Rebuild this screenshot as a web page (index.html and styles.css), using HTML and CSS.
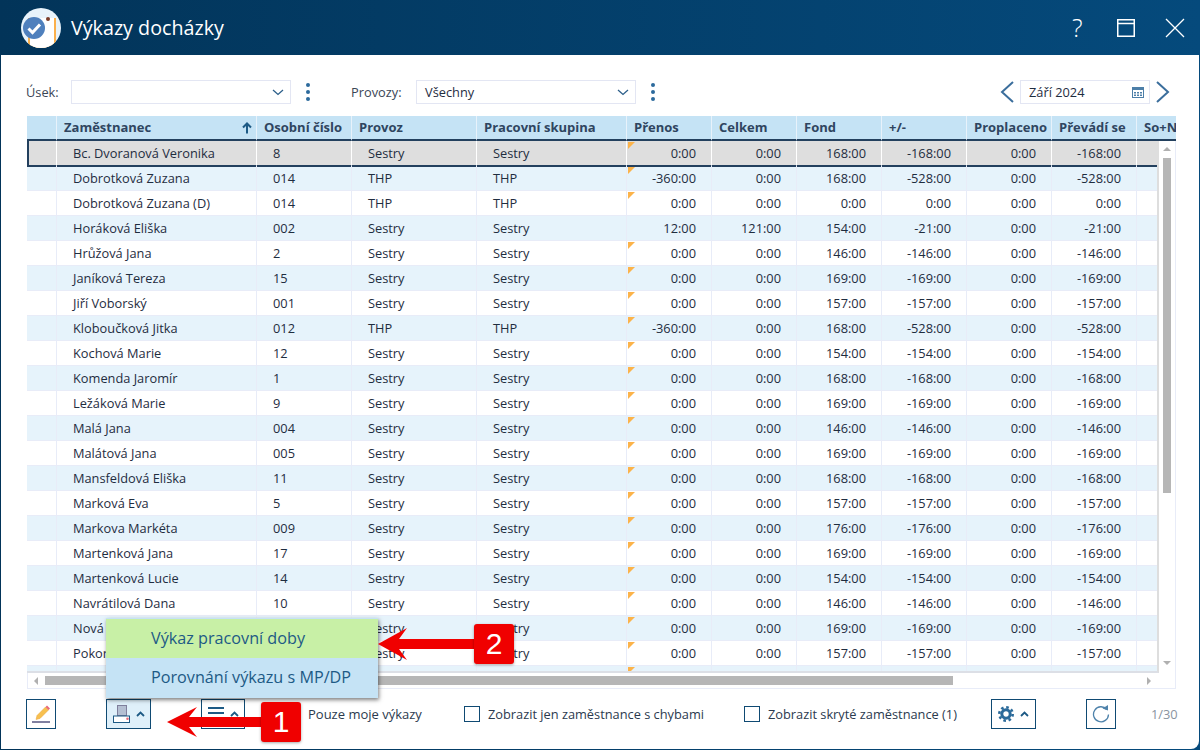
FILE: index.html
```html
<!DOCTYPE html>
<html lang="cs">
<head>
<meta charset="utf-8">
<title>Výkazy docházky</title>
<link rel="stylesheet" href="styles.css">
</head>
<body>
<div class="window">
  <header class="titlebar">
    <svg class="logo" width="40" height="40" viewBox="0 0 40 40">
      <defs><clipPath id="lc"><circle cx="20" cy="20" r="20"/></clipPath></defs>
      <circle cx="20" cy="20" r="20" fill="#e8f3fb"/>
      <g clip-path="url(#lc)">
        <rect x="7" y="10" width="28" height="32" fill="#fbb04c"/>
        <rect x="9" y="10" width="24" height="32" fill="#fff"/>
        <circle cx="27" cy="11" r="2" fill="#7b3d2a"/>
      </g>
      <circle cx="13" cy="20" r="11" fill="#4f80bd"/>
      <path d="M7.5 20.5l4 4 7.5-8" fill="none" stroke="#fff" stroke-width="3"/>
    </svg>
    <h1 class="title">Výkazy docházky</h1>
    <div class="winbtns">
      <span class="help">?</span>
      <svg width="18" height="18" viewBox="0 0 18 18"><path d="M.75.75h16.5v16.5H.75zM.75 4.5h16.5" fill="none" stroke="#fff" stroke-width="1.5"/></svg>
      <svg width="20" height="20" viewBox="0 0 20 20"><path d="M1 1l18 18M19 1L1 19" fill="none" stroke="#fff" stroke-width="1.3"/></svg>
    </div>
  </header>
  <main class="panel">
    <div class="filters">
      <span class="lbl lbl-usek">Úsek:</span>
      <div class="select"><span></span><svg width="12" height="7" viewBox="0 0 12 7"><path d="M1 1l5 4.500 5-4.500" fill="none" stroke="#2c5f8a" stroke-width="1.300"/></svg></div>
      <div class="dots"><i></i><i></i><i></i></div>
      <span class="lbl lbl-provozy">Provozy:</span>
      <div class="select"><span>Všechny</span><svg width="12" height="7" viewBox="0 0 12 7"><path d="M1 1l5 4.500 5-4.500" fill="none" stroke="#2c5f8a" stroke-width="1.300"/></svg></div>
      <div class="dots"><i></i><i></i><i></i></div>
      <svg class="prev" width="14" height="22" viewBox="0 0 14 22"><path d="M13 1L2 11l11 10" fill="none" stroke="#3b6e9c" stroke-width="2"/></svg>
      <div class="date"><span>Září 2024</span>
        <svg width="12" height="12" viewBox="0 0 12 12"><rect x=".5" y="1.500" width="11" height="10" fill="#fff" stroke="#4d7fa8"/><rect x="0" y="1" width="12" height="3" fill="#4d7fa8"/><path d="M2 6h2v1.500H2zM5 6h2v1.500H5zM8 6h2v1.500H8zM2 8.500h2V10H2zM5 8.500h2V10H5zM8 8.500h2V10H8z" fill="#4d7fa8"/></svg>
      </div>
      <svg class="next" width="14" height="22" viewBox="0 0 14 22"><path d="M1 1l11 10L1 21" fill="none" stroke="#3b6e9c" stroke-width="2"/></svg>
    </div>

    <section class="grid">
      <div class="row head">
        <div></div>
        <div class="sorted">Zaměstnanec<svg width="10" height="12" viewBox="0 0 10 12"><path d="M5 11.500V2M1 5.500L5 1.500l4 4" fill="none" stroke="#1d5a85" stroke-width="2"/></svg></div>
        <div>Osobní číslo</div><div>Provoz</div><div>Pracovní skupina</div><div>Přenos</div><div>Celkem</div><div>Fond</div><div>+/-</div><div>Proplaceno</div><div>Převádí se</div><div>So+N</div>
      </div>
      <div class="grid-body">
        <div class="rows">
          <div class="row sel"><div></div><div class="t">Bc. Dvoranová Veronika</div><div class="t">8</div><div class="t">Sestry</div><div class="t">Sestry</div><div class="n tri">0:00</div><div class="n">0:00</div><div class="n">168:00</div><div class="n">-168:00</div><div class="n">0:00</div><div class="n">-168:00</div><div></div></div>
          <div class="row alt"><div></div><div class="t">Dobrotková Zuzana</div><div class="t">014</div><div class="t">THP</div><div class="t">THP</div><div class="n tri">-360:00</div><div class="n">0:00</div><div class="n">168:00</div><div class="n">-528:00</div><div class="n">0:00</div><div class="n">-528:00</div><div></div></div>
          <div class="row"><div></div><div class="t">Dobrotková Zuzana (D)</div><div class="t">014</div><div class="t">THP</div><div class="t">THP</div><div class="n tri">0:00</div><div class="n">0:00</div><div class="n">0:00</div><div class="n">0:00</div><div class="n">0:00</div><div class="n">0:00</div><div></div></div>
          <div class="row alt"><div></div><div class="t">Horáková Eliška</div><div class="t">002</div><div class="t">Sestry</div><div class="t">Sestry</div><div class="n">12:00</div><div class="n">121:00</div><div class="n">154:00</div><div class="n">-21:00</div><div class="n">0:00</div><div class="n">-21:00</div><div></div></div>
          <div class="row"><div></div><div class="t">Hrůžová Jana</div><div class="t">2</div><div class="t">Sestry</div><div class="t">Sestry</div><div class="n tri">0:00</div><div class="n">0:00</div><div class="n">146:00</div><div class="n">-146:00</div><div class="n">0:00</div><div class="n">-146:00</div><div></div></div>
          <div class="row alt"><div></div><div class="t">Janíková Tereza</div><div class="t">15</div><div class="t">Sestry</div><div class="t">Sestry</div><div class="n tri">0:00</div><div class="n">0:00</div><div class="n">169:00</div><div class="n">-169:00</div><div class="n">0:00</div><div class="n">-169:00</div><div></div></div>
          <div class="row"><div></div><div class="t">Jiří Voborský</div><div class="t">001</div><div class="t">Sestry</div><div class="t">Sestry</div><div class="n tri">0:00</div><div class="n">0:00</div><div class="n">157:00</div><div class="n">-157:00</div><div class="n">0:00</div><div class="n">-157:00</div><div></div></div>
          <div class="row alt"><div></div><div class="t">Kloboučková Jitka</div><div class="t">012</div><div class="t">THP</div><div class="t">THP</div><div class="n tri">-360:00</div><div class="n">0:00</div><div class="n">168:00</div><div class="n">-528:00</div><div class="n">0:00</div><div class="n">-528:00</div><div></div></div>
          <div class="row"><div></div><div class="t">Kochová Marie</div><div class="t">12</div><div class="t">Sestry</div><div class="t">Sestry</div><div class="n tri">0:00</div><div class="n">0:00</div><div class="n">154:00</div><div class="n">-154:00</div><div class="n">0:00</div><div class="n">-154:00</div><div></div></div>
          <div class="row alt"><div></div><div class="t">Komenda Jaromír</div><div class="t">1</div><div class="t">Sestry</div><div class="t">Sestry</div><div class="n tri">0:00</div><div class="n">0:00</div><div class="n">168:00</div><div class="n">-168:00</div><div class="n">0:00</div><div class="n">-168:00</div><div></div></div>
          <div class="row"><div></div><div class="t">Ležáková Marie</div><div class="t">9</div><div class="t">Sestry</div><div class="t">Sestry</div><div class="n tri">0:00</div><div class="n">0:00</div><div class="n">169:00</div><div class="n">-169:00</div><div class="n">0:00</div><div class="n">-169:00</div><div></div></div>
          <div class="row alt"><div></div><div class="t">Malá Jana</div><div class="t">004</div><div class="t">Sestry</div><div class="t">Sestry</div><div class="n tri">0:00</div><div class="n">0:00</div><div class="n">146:00</div><div class="n">-146:00</div><div class="n">0:00</div><div class="n">-146:00</div><div></div></div>
          <div class="row"><div></div><div class="t">Malátová Jana</div><div class="t">005</div><div class="t">Sestry</div><div class="t">Sestry</div><div class="n tri">0:00</div><div class="n">0:00</div><div class="n">169:00</div><div class="n">-169:00</div><div class="n">0:00</div><div class="n">-169:00</div><div></div></div>
          <div class="row alt"><div></div><div class="t">Mansfeldová Eliška</div><div class="t">11</div><div class="t">Sestry</div><div class="t">Sestry</div><div class="n tri">0:00</div><div class="n">0:00</div><div class="n">168:00</div><div class="n">-168:00</div><div class="n">0:00</div><div class="n">-168:00</div><div></div></div>
          <div class="row"><div></div><div class="t">Marková Eva</div><div class="t">5</div><div class="t">Sestry</div><div class="t">Sestry</div><div class="n tri">0:00</div><div class="n">0:00</div><div class="n">157:00</div><div class="n">-157:00</div><div class="n">0:00</div><div class="n">-157:00</div><div></div></div>
          <div class="row alt"><div></div><div class="t">Markova Markéta</div><div class="t">009</div><div class="t">Sestry</div><div class="t">Sestry</div><div class="n tri">0:00</div><div class="n">0:00</div><div class="n">176:00</div><div class="n">-176:00</div><div class="n">0:00</div><div class="n">-176:00</div><div></div></div>
          <div class="row"><div></div><div class="t">Martenková Jana</div><div class="t">17</div><div class="t">Sestry</div><div class="t">Sestry</div><div class="n tri">0:00</div><div class="n">0:00</div><div class="n">169:00</div><div class="n">-169:00</div><div class="n">0:00</div><div class="n">-169:00</div><div></div></div>
          <div class="row alt"><div></div><div class="t">Martenková Lucie</div><div class="t">14</div><div class="t">Sestry</div><div class="t">Sestry</div><div class="n tri">0:00</div><div class="n">0:00</div><div class="n">154:00</div><div class="n">-154:00</div><div class="n">0:00</div><div class="n">-154:00</div><div></div></div>
          <div class="row"><div></div><div class="t">Navrátilová Dana</div><div class="t">10</div><div class="t">Sestry</div><div class="t">Sestry</div><div class="n tri">0:00</div><div class="n">0:00</div><div class="n">146:00</div><div class="n">-146:00</div><div class="n">0:00</div><div class="n">-146:00</div><div></div></div>
          <div class="row alt"><div></div><div class="t">Nová</div><div class="t"></div><div class="t">Sestry</div><div class="t">Sestry</div><div class="n tri">0:00</div><div class="n">0:00</div><div class="n">169:00</div><div class="n">-169:00</div><div class="n">0:00</div><div class="n">-169:00</div><div></div></div>
          <div class="row"><div></div><div class="t">Pokorná</div><div class="t"></div><div class="t">Sestry</div><div class="t">Sestry</div><div class="n tri">0:00</div><div class="n">0:00</div><div class="n">157:00</div><div class="n">-157:00</div><div class="n">0:00</div><div class="n">-157:00</div><div></div></div>
          <div class="row alt"><div></div><div class="t"></div><div class="t"></div><div class="t"></div><div class="t"></div><div class="n tri"></div><div class="n"></div><div class="n"></div><div class="n"></div><div class="n"></div><div class="n"></div><div></div></div>
        </div>
        <div class="vscroll">
          <i class="arr up"></i>
          <div class="vthumb"></div>
          <i class="arr down"></i>
        </div>
      </div>
      <div class="hscroll">
        <i class="arr left"></i>
        <div class="hthumb"></div>
        <i class="arr right"></i>
      </div>
    </section>

    <footer class="footer">
      <button class="btn btn-edit" type="button">
        <svg width="20" height="20" viewBox="0 0 20 20"><path d="M5 15.500l1-4L14.500 3l3 3L9 14.500z" fill="#f7c04f" stroke="#e9a33a" stroke-width=".5"/><path d="M14.500 3L16 1.500l3 3L17.500 6z" fill="#e8697a"/><rect x="1" y="17" width="18" height="2" fill="#8080a0"/></svg>
      </button>
      <button class="btn btn-print active" type="button">
        <svg width="18" height="18" viewBox="0 0 18 18"><rect x="5.500" y=".5" width="9" height="10" fill="#b4bfd2" stroke="#7f7f9c"/><rect x="1.500" y="11" width="16" height="6.500" fill="#fff" stroke="#1d5a85"/><circle cx="15.500" cy="13.800" r="1.300" fill="#e8697a"/></svg>
        <svg class="caret" width="9" height="6" viewBox="0 0 9 6"><path d="M1 5l3.500-3.500L8 5" fill="none" stroke="#1d5a85" stroke-width="1.800"/></svg>
      </button>
      <button class="btn btn-list" type="button">
        <svg width="16" height="14" viewBox="0 0 16 14"><path d="M0 1h16M0 6h16M0 11h16" stroke="#1d5a85" stroke-width="2"/></svg>
        <svg class="caret" width="9" height="6" viewBox="0 0 9 6"><path d="M1 5l3.500-3.500L8 5" fill="none" stroke="#1d5a85" stroke-width="1.800"/></svg>
      </button>
      <span class="txt only-mine">Pouze moje výkazy</span>
      <label class="check chk-errors"><i></i><span class="txt">Zobrazit jen zaměstnance s chybami</span></label>
      <label class="check chk-hidden"><i></i><span class="txt">Zobrazit skryté zaměstnance (1)</span></label>
      <button class="btn btn-gear" type="button">
        <svg width="16" height="16" viewBox="0 0 16 16"><circle cx="8" cy="8" r="4.200" fill="none" stroke="#2a6a9a" stroke-width="3"/><circle cx="8" cy="8" r="6.700" fill="none" stroke="#2a6a9a" stroke-width="2.600" stroke-dasharray="2.600 2.660"/></svg>
        <svg class="caret" width="9" height="6" viewBox="0 0 9 6"><path d="M1 5l3.500-3.500L8 5" fill="none" stroke="#1d5a85" stroke-width="1.800"/></svg>
      </button>
      <button class="btn btn-refresh" type="button">
        <svg width="18" height="18" viewBox="0 0 18 18"><path d="M14.800 4.500A7.500 7.500 0 1 0 16.500 9.500" fill="none" stroke="#4f83ab" stroke-width="1.300"/><path d="M10.500 3.500l5.500 2V0z" fill="#4f83ab"/></svg>
      </button>
      <span class="pager">1/30</span>
    </footer>
  </main>

  <nav class="popup">
    <div class="popup-item hot">Výkaz pracovní doby</div>
    <div class="popup-item">Porovnání výkazu s MP/DP</div>
  </nav>

  <svg class="arrow arrow-one" width="100" height="32" viewBox="0 0 100 32"><path d="M0 16L30 1l-8 10h78v10H22l8 10z" fill="#f00000"/></svg>
  <div class="badge badge-one">1</div>
  <svg class="arrow arrow-two" width="100" height="32" viewBox="0 0 100 32"><path d="M0 16L29 0l-8 11h79v10H21l8 11z" fill="#f00000"/></svg>
  <div class="badge badge-two">2</div>
</div>
</body>
</html>
```

FILE: styles.css
```css
* { box-sizing: border-box; }
html, body { margin: 0; padding: 0; }
body { font-family: "Open Sans", sans-serif; font-size: 12.8px; color: #1f2d3f; overflow: hidden; }

.window { position: relative; width: 1200px; height: 750px; display: flex; flex-direction: column; background: linear-gradient(90deg, #023459 0%, #054a7c 100%); }

.titlebar { height: 55px; flex: none; display: flex; align-items: center; padding-left: 21px; }
.logo { flex: none; }
.title { margin: 0 0 0 10px; font-size: 19.7px; font-weight: 400; color: #fff; line-height: 1; }
.winbtns { margin-left: auto; display: flex; align-items: center; }
.help { color: #fff; font-size: 25px; font-weight: 300; line-height: 1; margin-right: 33px; width: 12px; }
.winbtns svg:nth-child(2) { margin-right: 30px; }
.winbtns svg:nth-child(3) { margin-right: 15px; }

.panel { flex: 1; margin: 0 1px 1px; background: #fff; padding: 25px 0 0 25px; border-bottom-right-radius: 8px; min-height: 0; }

.filters { height: 24px; display: flex; align-items: center; }
.lbl { color: #3a4656; }
.lbl-usek { width: 45px; }
.lbl-provozy { width: 65px; margin-left: 41px; }
.select { width: 220px; height: 24px; border: 1px solid #e3e6f3; display: flex; align-items: center; justify-content: space-between; padding: 0 6px 0 8px; }
.dots { width: 4px; margin-left: 15px; display: flex; flex-direction: column; gap: 3px; }
.dots i { width: 4px; height: 4px; border-radius: 50%; background: #2c6a9c; }
.prev { margin-left: 345px; flex: none; }
.next { margin-left: 6px; flex: none; }
.date { width: 130px; height: 24px; margin-left: 6px; border: 1px solid #e3e6f3; display: flex; align-items: center; justify-content: space-between; padding: 0 5px 0 8px; }

.grid { width: 1149px; height: 573px; margin: 12px 0 0 1px; overflow: hidden; }
.row { display: grid; grid-template-columns: 29px 200px 95px 125px 150px repeat(7, 85px); width: 1194px; height: 25px; }
.row > div { border-left: 1px solid #e8ecf8; border-bottom: 1px solid #e8ecf8; padding-top: 1px; line-height: 23px; white-space: nowrap; }
.row > div:first-child { border-left: 0; }
.row .t { padding-left: 16px; }
.row .n { padding-right: 15px; text-align: right; }
.row.alt { background: #e6f3fb; }

.row.head { background: #c5e3f5; }
.row.head > div { border-bottom: 2px solid #23405e; border-left-color: #e8f2fb; padding: 0 0 0 7px; font-size: 13px; font-weight: 700; color: #2f4560; line-height: 23px; }
.row.head .sorted { display: flex; align-items: center; justify-content: space-between; padding-right: 4px; }

.row.sel { background: #dedede; }
.row.sel > div { border-bottom: 2px solid #23405e; border-left-color: #fff; }
.row.sel > div:first-child { border-left: 2px solid #23405e; }

.tri { position: relative; }
.tri::before { content: ""; position: absolute; left: 1px; top: 1px; width: 7px; height: 7px; background: #fcb34a; clip-path: polygon(0 0, 100% 0, 0 100%); }

.grid-body { display: flex; height: 532px; }
.rows { width: 1132px; height: 532px; overflow: hidden; border-bottom: 2px solid #dcdfe6; border-right: 2px solid #dedede; }
.vscroll { width: 17px; display: flex; flex-direction: column; align-items: center; padding: 6px 0 8px; border-right: 1px solid #e8ecf8; }
.vthumb { width: 8px; height: 335px; margin-top: 7px; background: #b6b6b6; }
.arr { display: block; width: 0; height: 0; }
.arr.up { border-left: 4px solid transparent; border-right: 4px solid transparent; border-bottom: 4px solid #b0b0b0; }
.arr.down { margin-top: auto; border-left: 4px solid transparent; border-right: 4px solid transparent; border-top: 4px solid #b0b0b0; }
.hscroll { height: 16px; display: flex; align-items: center; padding-left: 6px; border-left: 1px solid #e8ecf8; border-right: 1px solid #e8ecf8; border-bottom: 1px solid #e8ecf8; }
.hthumb { width: 908px; height: 9px; margin-left: 7px; background: #b6b6b6; }
.arr.left { border-top: 4px solid transparent; border-bottom: 4px solid transparent; border-right: 4px solid #b0b0b0; }
.arr.right { margin-left: auto; margin-right: 24px; border-top: 4px solid transparent; border-bottom: 4px solid transparent; border-left: 4px solid #b0b0b0; }

.footer { display: flex; align-items: center; height: 30px; margin-top: 10px; }
.btn { height: 30px; padding: 0; background: #fff; border: 1px solid #0f4a73; display: flex; align-items: center; justify-content: center; font: inherit; flex: none; }
.btn.active { background: #dff0fa; }
.btn-edit { width: 30px; }
.btn-print { width: 45px; margin-left: 50px; }
.btn-list { width: 44px; margin-left: 50px; }
.btn-gear { width: 45px; margin-left: 34px; }
.btn-refresh { width: 30px; margin-left: 50px; }
.caret { margin-left: 6px; }
.txt { color: #2b3a4e; white-space: nowrap; }
.only-mine { width: 114px; margin-left: 63px; font-size: 13px; }
.check { display: flex; align-items: center; }
.check i { width: 16px; height: 16px; border: 1px solid #0f4a73; margin-right: 8px; flex: none; }
.chk-errors { margin-left: 42px; }
.chk-hidden { margin-left: 40px; }
.pager { margin-left: 35px; color: #8a94a0; }

.popup { position: absolute; left: 106px; top: 618px; width: 272px; background: #c5e3f5; padding-top: 1px; box-shadow: 1px 2px 4px rgba(0, 0, 0, .5); }
.popup-item { height: 39.5px; padding-left: 45px; font-size: 16.2px; line-height: 39px; color: #1d5a85; }
.popup-item.hot { height: 39px; background: #c8f0a6; }

.arrow { position: absolute; }
.arrow-one { left: 167px; top: 706px; }
.arrow-two { left: 378px; top: 628px; }
.badge { position: absolute; width: 40px; height: 40px; background: #f00000; border-radius: 3px; color: #fff; font-family: "Liberation Sans", sans-serif; font-size: 30px; line-height: 40px; text-align: center; box-shadow: 0 1px 3px rgba(0, 0, 0, .35); }
.badge-one { left: 261px; top: 702px; }
.badge-two { left: 474px; top: 624px; }
```
